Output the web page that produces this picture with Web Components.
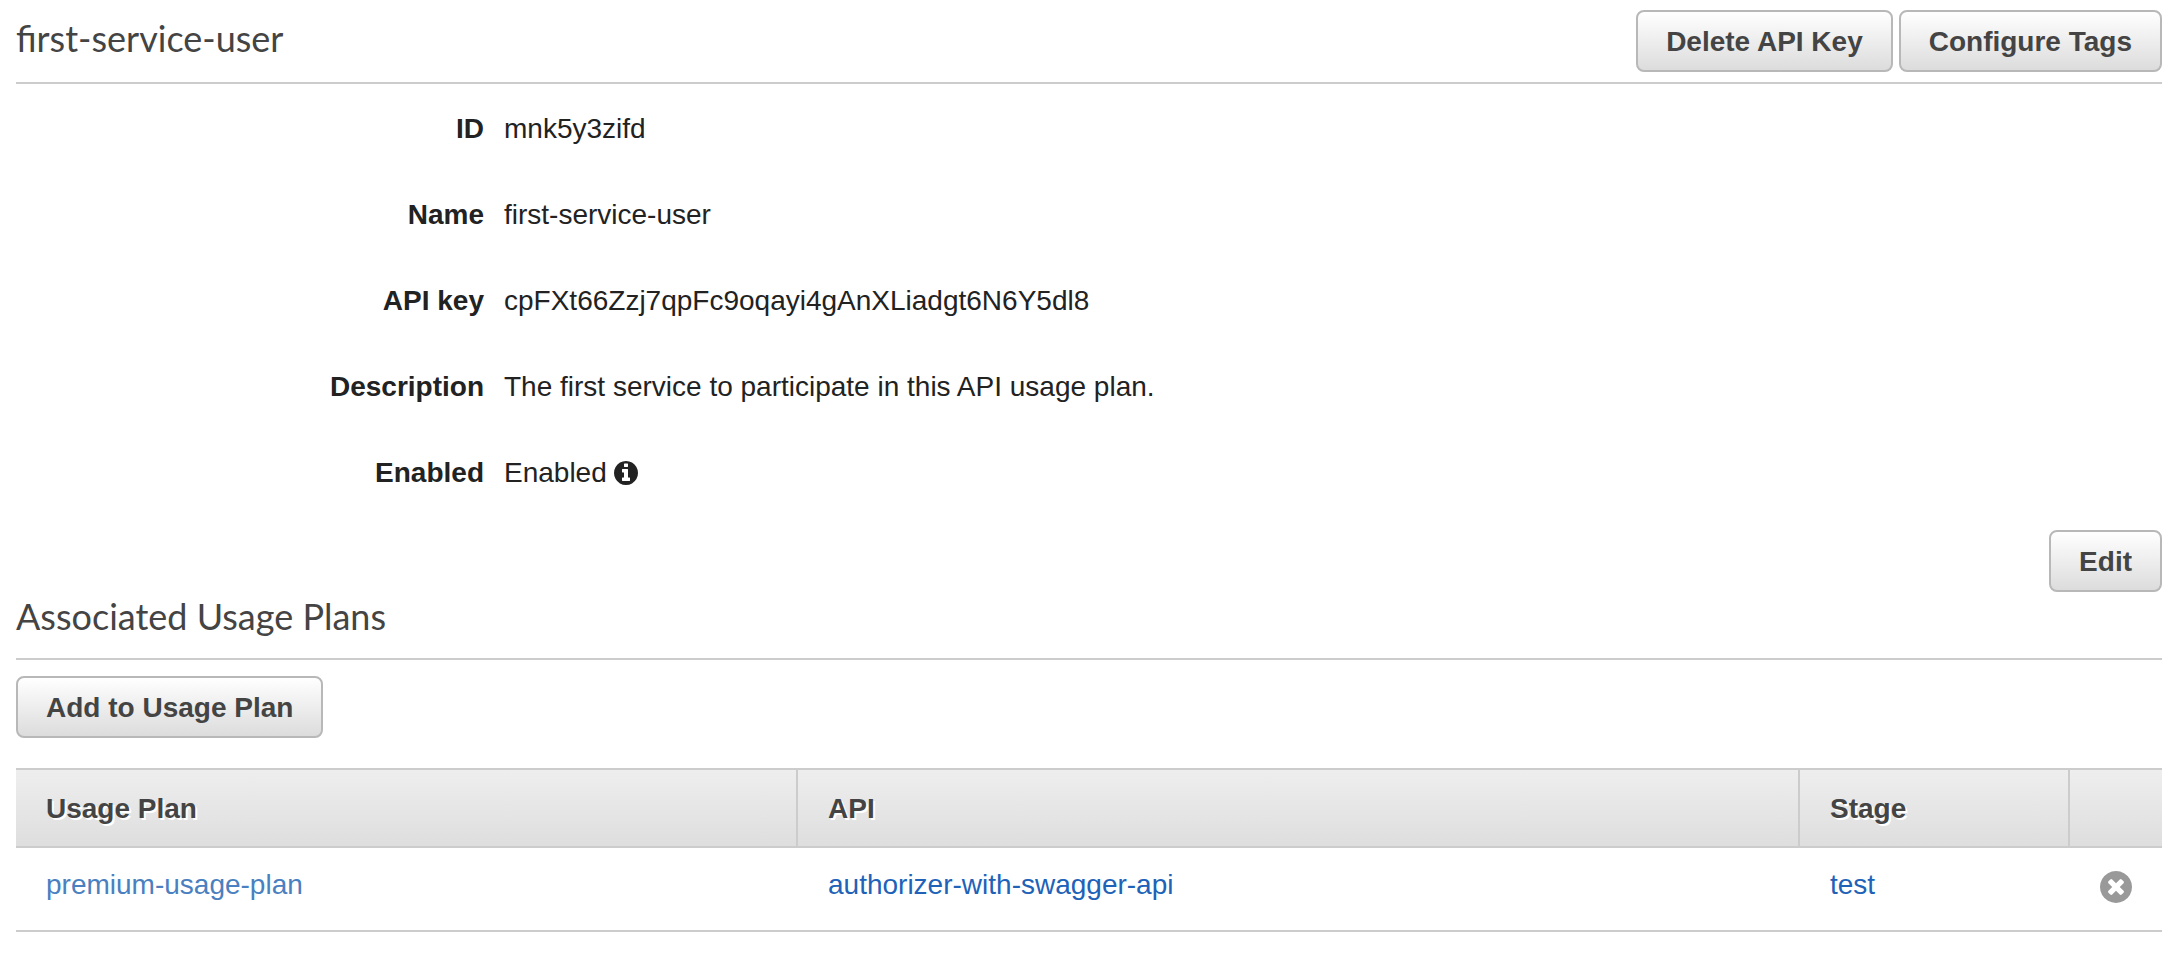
<!DOCTYPE html>
<html lang="en">
<head>
<meta charset="utf-8">
<title>API key: first-service-user</title>
<style>
  body { margin: 0; background: #fff; }
</style>
</head>
<body>
<api-key-page></api-key-page>

<script>
  const define = (name, html, setup) => {
    const template = document.createElement('template');
    template.innerHTML = html;
    customElements.define(name, class extends HTMLElement {
      constructor() {
        super();
        this.attachShadow({ mode: 'open' }).append(template.content.cloneNode(true));
      }
      connectedCallback() {
        if (setup) setup(this, this.shadowRoot);
      }
    });
  };

  const DISC = 'M1536 896q0 209-103 385.5t-279.5 279.5-385.5 103-385.5-103-279.5-279.5-103-385.5 103-385.5 279.5-279.5 385.5-103 385.5 103 279.5 279.5 103 385.5z';
  const ICONS = {
    info: 'M1024 1376v-160q0-14-9-23t-23-9h-96v-512q0-14-9-23t-23-9h-320q-14 0-23 9t-9 23v160q0 14 9 23t23 9h96v320h-96q-14 0-23 9t-9 23v160q0 14 9 23t23 9h448q14 0 23-9t9-23zm-128-896v-160q0-14-9-23t-23-9h-192q-14 0-23 9t-9 23v160q0 14 9 23t23 9h192q14 0 23-9t9-23z' + DISC,
    remove: 'M1149 1122q0-26-19-45l-181-181 181-181q19-19 19-45 0-27-19-46l-90-90q-19-19-46-19-26 0-45 19l-181 181-181-181q-19-19-45-19-27 0-46 19l-90 90q-19 19-19 46 0 26 19 45l181 181-181 181q-19 19-19 45 0 27 19 46l90 90q19 19 46 19 26 0 45-19l181-181 181 181q19 19 45 19 27 0 46-19l90-90q19-19 19-46z' + DISC
  };

  define('disc-icon', `
    <style>
      :host { display: inline-block; width: 24px; height: 24px; }
      svg { display: block; width: 100%; height: 100%; fill: currentColor; }
    </style>
    <svg viewBox="0 128 1536 1536" aria-hidden="true"><path fill-rule="evenodd"/></svg>
  `, (host, root) => root.querySelector('path').setAttribute('d', ICONS[host.getAttribute('name')]));

  define('action-button', `
    <style>
      :host { display: inline-block; }
      button {
        display: block; box-sizing: border-box; height: 62px; margin: 0; padding: 2px 28px 0;
        border: 2px solid #b8b8b8; border-radius: 8px;
        background: linear-gradient(#fff, #dcdcdc);
        color: #444; font: bold 28px/40px "Liberation Sans", Arial, sans-serif;
        white-space: nowrap; cursor: pointer;
      }
    </style>
    <button type="button"><slot></slot></button>
  `);

  define('section-header', `
    <style>
      :host { display: flex; justify-content: space-between; align-items: flex-start;
              border-bottom: 2px solid #ccc; }
      ::slotted(h1), ::slotted(h2) {
        margin: 0; color: #444; font: 400 36px/44px Lato, sans-serif;
      }
      .actions { display: flex; gap: 6px; }
    </style>
    <slot></slot>
    <div class="actions"><slot name="actions"></slot></div>
  `);

  define('detail-row', `
    <style>
      :host { display: grid; grid-template-columns: 468px 1fr; column-gap: 20px;
              padding: 25px 0 21px; line-height: 40px; }
      .label { text-align: right; font-weight: bold; }
      .value { display: flex; align-items: center; gap: 7px; }
    </style>
    <div class="label"><slot name="label"></slot></div>
    <div class="value"><slot></slot></div>
  `);

  define('usage-plan-table', `
    <style>
      :host { display: block; }
      table { width: 100%; border-collapse: separate; border-spacing: 0; table-layout: fixed; }
      .plan { width: 782px; } .stage { width: 270px; } .remove { width: 92px; }
      th, td { box-sizing: border-box; padding: 0 30px; text-align: left; line-height: 40px;
               border-bottom: 2px solid #ccc; }
      th { height: 80px; padding-top: 2px; border-top: 2px solid #ccc; border-right: 2px solid #ccc;
           background: linear-gradient(#eee, #dedede); color: #444; text-shadow: 2px 2px 0 #fff; }
      th:last-child { border-right: 0; }
      td { height: 84px; padding-bottom: 8px; }
      td:last-child { padding-bottom: 4px; }
      a { color: #2062b8; text-decoration: none; }
      a.primary { color: #4a80c0; }
      button { display: block; padding: 0; border: 0; background: none; color: #999; cursor: pointer; }
      disc-icon { display: block; width: 32px; height: 32px; }
    </style>
    <table>
      <colgroup><col class="plan"><col><col class="stage"><col class="remove"></colgroup>
      <thead>
        <tr><th scope="col">Usage Plan</th><th scope="col">API</th><th scope="col">Stage</th><th scope="col"></th></tr>
      </thead>
      <tbody>
        <tr>
          <td><a class="primary" href="#plan">premium-usage-plan</a></td>
          <td><a href="#api">authorizer-with-swagger-api</a></td>
          <td><a href="#stage">test</a></td>
          <td><button type="button" aria-label="Remove"><disc-icon name="remove"></disc-icon></button></td>
        </tr>
      </tbody>
    </table>
  `);

  define('api-key-page', `
    <style>
      :host { display: block; padding: 10px 18px 24px 16px; color: #222;
              font: 28px/40px "Liberation Sans", Arial, sans-serif; }
      .top { padding-bottom: 10px; }
      .top h1 { padding-top: 6px; }
      .edit { display: flex; justify-content: flex-end; padding: 16px 0 2px; }
      .plans { padding-bottom: 20px; }
      .toolbar { padding: 16px 0 30px; }
      .toolbar action-button { display: block; }
    </style>
    <section-header class="top">
      <h1>first-service-user</h1>
      <action-button slot="actions">Delete API Key</action-button>
      <action-button slot="actions">Configure Tags</action-button>
    </section-header>
    <main>
      <detail-row><span slot="label">ID</span>mnk5y3zifd</detail-row>
      <detail-row><span slot="label">Name</span>first-service-user</detail-row>
      <detail-row><span slot="label">API key</span>cpFXt66Zzj7qpFc9oqayi4gAnXLiadgt6N6Y5dl8</detail-row>
      <detail-row><span slot="label">Description</span>The first service to participate in this API usage plan.</detail-row>
      <detail-row><span slot="label">Enabled</span>Enabled<disc-icon name="info"></disc-icon></detail-row>
      <div class="edit"><action-button>Edit</action-button></div>
      <section-header class="plans"><h2>Associated Usage Plans</h2></section-header>
      <div class="toolbar"><action-button>Add to Usage Plan</action-button></div>
      <usage-plan-table></usage-plan-table>
    </main>
  `);
</script>
</body>
</html>
